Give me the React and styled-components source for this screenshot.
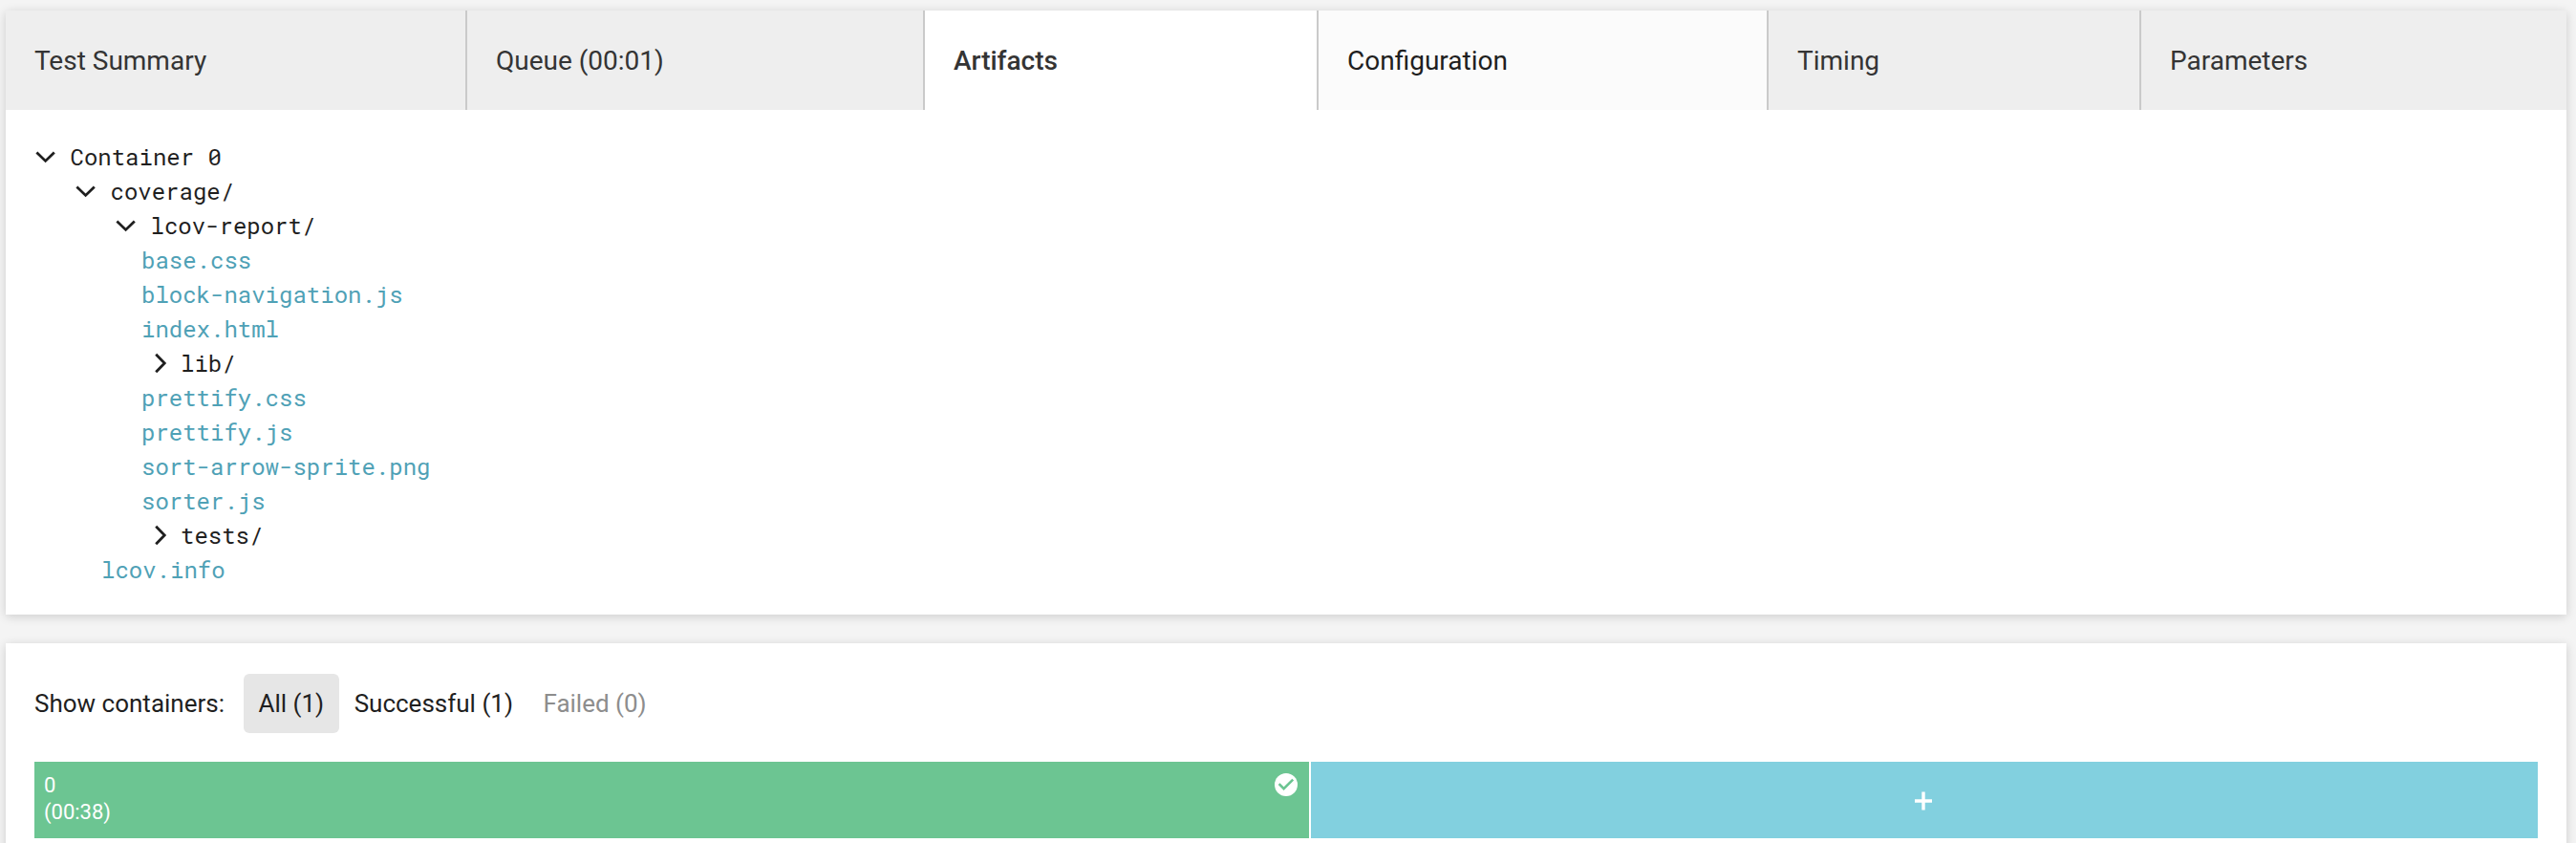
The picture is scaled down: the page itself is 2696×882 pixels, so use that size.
import React from "react";
import styled, { createGlobalStyle } from "styled-components";

const GlobalStyle = createGlobalStyle`
  *, *::before, *::after { box-sizing: border-box; }
  body {
    margin: 0;
    background: #f4f4f4;
    color: #1f1f1f;
    font-family: Roboto, "Liberation Sans", sans-serif;
    overflow: hidden;
  }
`;

const Page = styled.main`
  display: flex;
  flex-direction: column;
  gap: 30px;
  width: 2696px;
  height: 882px;
  padding: 11px 10px 0 6px;
  overflow: hidden;
`;

const Card = styled.section`
  flex: none;
  background: #fff;
  box-shadow: 0 2px 10px rgba(0, 0, 0, 0.16);
`;

const TabBar = styled.nav`
  display: flex;
  height: 104px;
`;

const tabBackground = { idle: "#eeeeee", active: "#ffffff", hover: "#fbfbfb" };
const tabColor = { idle: "#343434", active: "#343434", hover: "#1f1f1f" };

const Tab = styled.a`
  flex: 0 0 ${(p) => p.$width}px;
  display: flex;
  align-items: center;
  padding: 2px 30px 0;
  border-right: 2px solid #cacaca;
  background: ${(p) => tabBackground[p.$state]};
  color: ${(p) => tabColor[p.$state]};
  font-size: 28px;
  font-weight: ${(p) => (p.$state === "active" ? 500 : 400)};
  line-height: 40px;
  white-space: nowrap;
  &:last-child { border-right: 0; }
`;

const Tree = styled.div`
  padding: 30px;
  font-family: "Roboto Mono", "Liberation Mono", monospace;
  font-size: 24px;
  line-height: 36px;
`;

const Row = styled.div`
  display: flex;
  align-items: center;
  height: 36px;
  padding-left: ${(p) => p.$indent}px;
  white-space: pre;
`;

const Label = styled.span`
  padding-top: 2px;
`;

const FileLink = styled.a`
  padding-top: 2px;
  color: #4fa1b6;
`;

const Chevron = styled.svg`
  flex: none;
  width: ${(p) => (p.$open ? 22 : 14)}px;
  height: 22px;
  margin-top: 2px;
  margin-right: ${(p) => (p.$open ? 15.5 : 14)}px;
  fill: none;
  stroke: currentColor;
  stroke-width: 2.8;
`;

const ContainersCard = styled(Card)`
  height: 240px;
  padding: 32px 30px 0;
`;

const FilterRow = styled.div`
  display: flex;
  align-items: center;
  height: 62px;
  font-size: 26px;
  line-height: 62px;
`;

const FilterLabel = styled.span`
  width: 219px;
`;

const Filter = styled.button`
  height: 62px;
  padding: 0 16px 0 15.5px;
  border: 0;
  border-radius: 6px;
  background: ${(p) => (p.$selected ? "#e6e6e6" : "transparent")};
  color: ${(p) => (p.$muted ? "#8d8d8d" : "#1f1f1f")};
  font: inherit;
  white-space: nowrap;
`;

const Bars = styled.div`
  display: flex;
  gap: 2px;
  height: 80px;
  margin-top: 30px;
`;

const ContainerBar = styled.div`
  display: flex;
  justify-content: space-between;
  width: 1334px;
  padding: 11px 12px 0 10px;
  background: #6cc592;
  color: #fff;
  font-size: 22px;
  line-height: 28px;
`;

const AddBar = styled.div`
  display: flex;
  flex: 1;
  align-items: center;
  justify-content: center;
  padding: 2px 2px 0 0;
  background: #82d0df;
`;

const Icon = styled.svg`
  flex: none;
  display: block;
`;

const StatusIcon = styled(Icon)`
  margin-top: 1px;
`;

const tabs = [
  ["Test Summary", 483, "idle"],
  ["Queue (00:01)", 479, "idle"],
  ["Artifacts", 412, "active"],
  ["Configuration", 471, "hover"],
  ["Timing", 390, "idle"],
  ["Parameters", 445, "idle"],
];

const rows = [
  ["open", 0, "Container 0"],
  ["open", 42, "coverage/"],
  ["open", 84, "lcov-report/"],
  ["file", 112, "base.css"],
  ["file", 112, "block-navigation.js"],
  ["file", 112, "index.html"],
  ["closed", 125, "lib/"],
  ["file", 112, "prettify.css"],
  ["file", 112, "prettify.js"],
  ["file", 112, "sort-arrow-sprite.png"],
  ["file", 112, "sorter.js"],
  ["closed", 125, "tests/"],
  ["file", 70, "lcov.info"],
];

function TreeRow({ kind, indent, name }) {
  if (kind === "file") {
    return (
      <Row $indent={indent}>
        <FileLink>{name}</FileLink>
      </Row>
    );
  }
  const open = kind === "open";
  return (
    <Row $indent={indent}>
      <Chevron $open={open} viewBox={open ? "0 0 22 22" : "0 0 14 22"}>
        <path d={open ? "M2.4 6.5 L11.6 15.4 L20.8 6.5" : "M2.2 1.8 L11.2 11 L2.2 20.2"} />
      </Chevron>
      <Label>{name}</Label>
    </Row>
  );
}

export default function App() {
  return (
    <Page>
      <GlobalStyle />
      <Card>
        <TabBar>
          {tabs.map(([name, width, state]) => (
            <Tab key={name} $width={width} $state={state}>{name}</Tab>
          ))}
        </TabBar>
        <Tree>
          {rows.map(([kind, indent, name]) => (
            <TreeRow key={name} kind={kind} indent={indent} name={name} />
          ))}
        </Tree>
      </Card>
      <ContainersCard>
        <FilterRow>
          <FilterLabel>Show containers:</FilterLabel>
          <Filter $selected>All (1)</Filter>
          <Filter>Successful (1)</Filter>
          <Filter $muted>Failed (0)</Filter>
        </FilterRow>
        <Bars>
          <ContainerBar>
            <div>
              <div>0</div>
              <div>(00:38)</div>
            </div>
            <StatusIcon width="24" height="24" viewBox="0 0 24 24">
              <circle cx="12" cy="12" r="12" fill="#fff" />
              <path d="M4.6 11.2 L9.6 16.2 L19.2 6.6" fill="none" stroke="#6cc592" strokeWidth="2.6" />
            </StatusIcon>
          </ContainerBar>
          <AddBar>
            <Icon width="20" height="20" viewBox="0 0 20 20">
              <path d="M10 0.5 V19.5 M1 10 H19" fill="none" stroke="#fff" strokeWidth="3.4" />
            </Icon>
          </AddBar>
        </Bars>
      </ContainersCard>
    </Page>
  );
}
